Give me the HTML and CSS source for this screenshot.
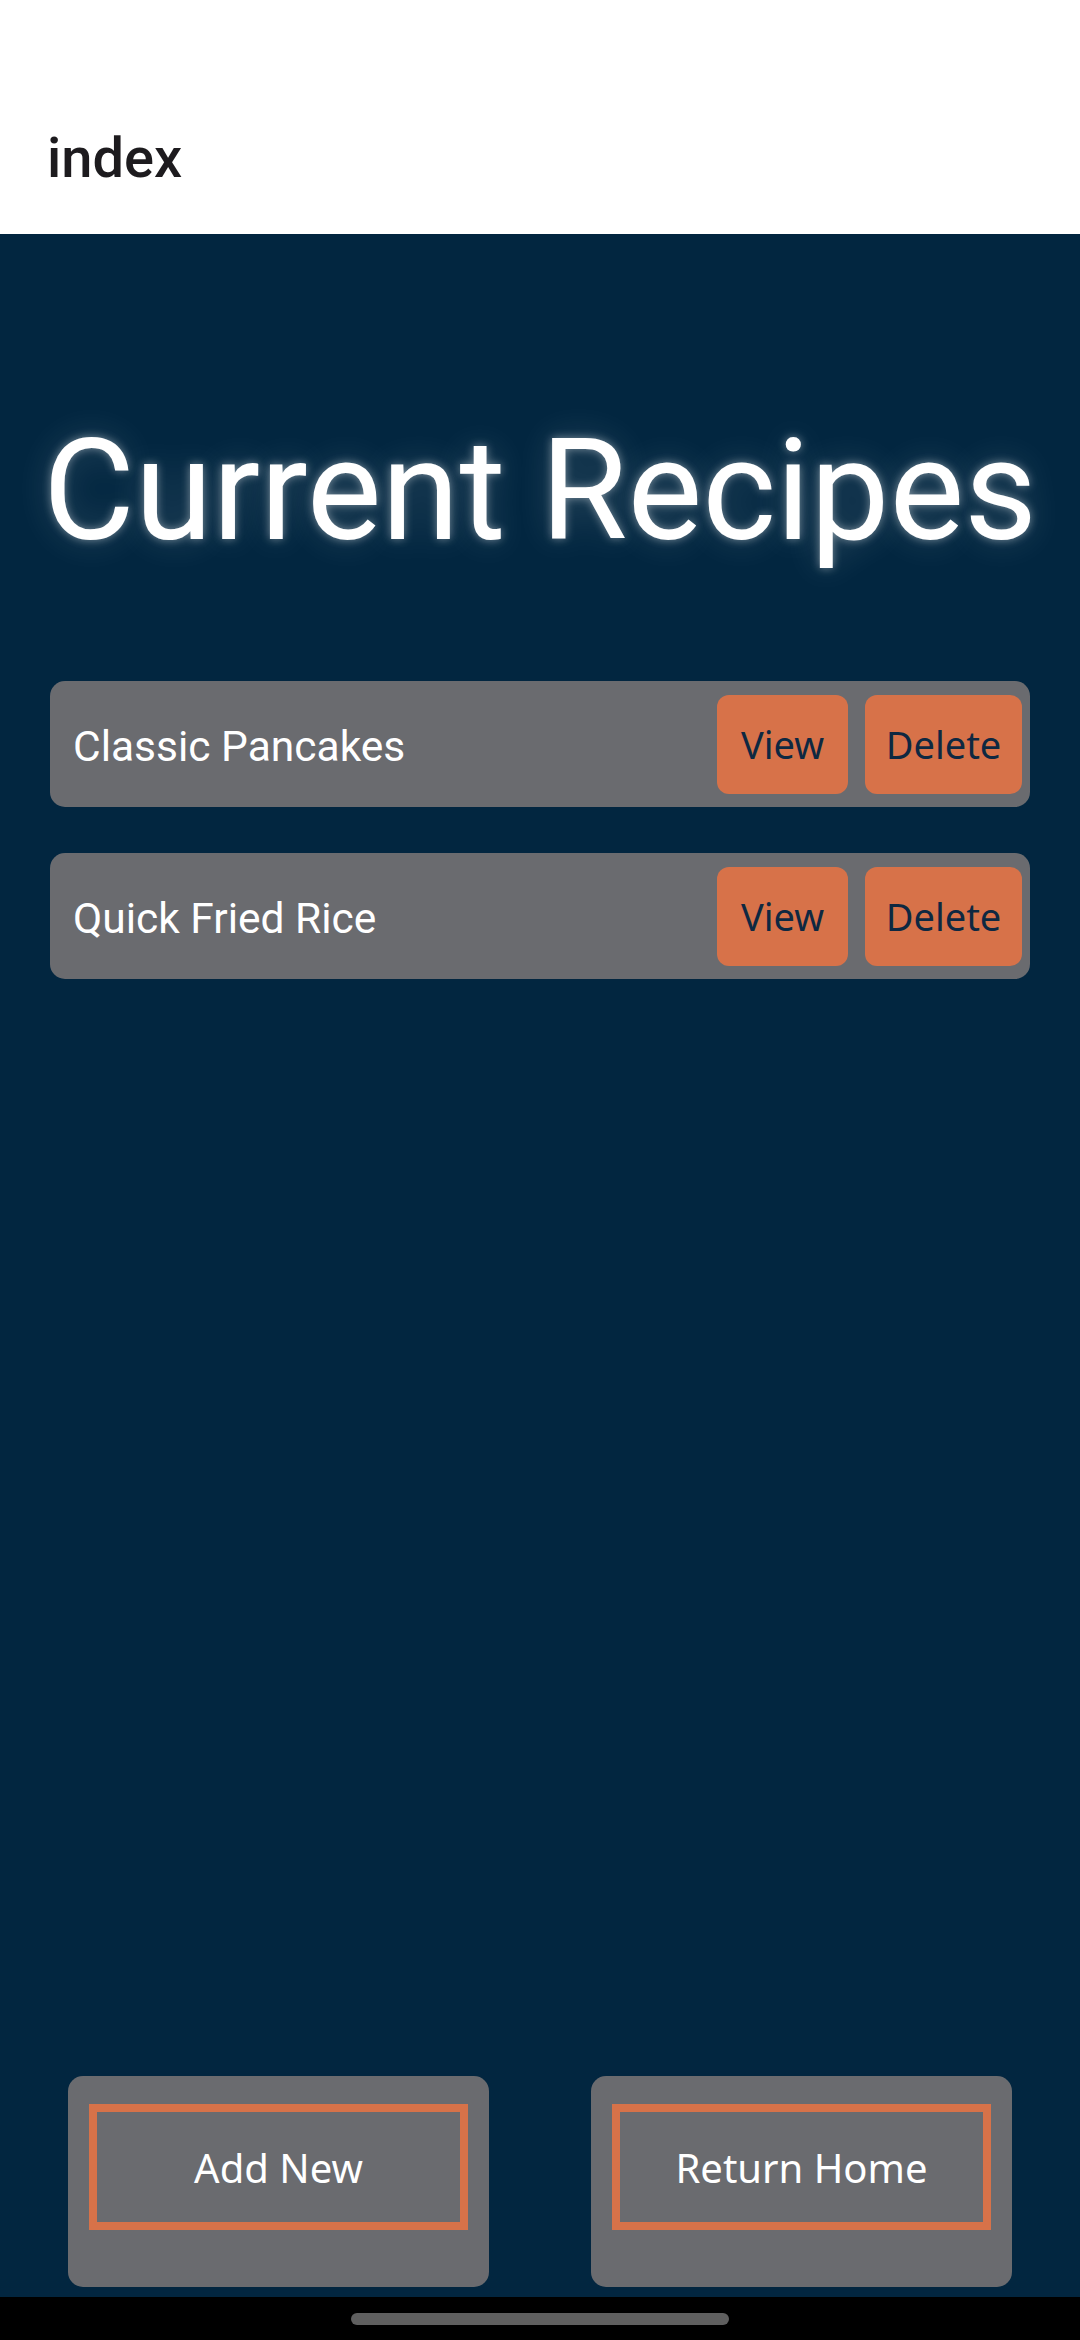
FILE: index.html
```html
<!DOCTYPE html>
<html lang="en">
<head>
<meta charset="utf-8">
<title>index</title>
<link rel="stylesheet" href="styles.css">
</head>
<body>
<div class="screen">
  <header class="appbar">
    <h1 class="appbar-title">index</h1>
  </header>
  <main class="content">
    <h2 class="page-title">Current Recipes</h2>
    <ul class="recipe-list">
      <li class="recipe-card">
        <span class="recipe-name">Classic Pancakes</span>
        <div class="recipe-actions">
          <button class="pill-btn pill-view">View</button>
          <button class="pill-btn pill-delete">Delete</button>
        </div>
      </li>
      <li class="recipe-card">
        <span class="recipe-name">Quick Fried Rice</span>
        <div class="recipe-actions">
          <button class="pill-btn pill-view">View</button>
          <button class="pill-btn pill-delete">Delete</button>
        </div>
      </li>
    </ul>
    <div class="spacer"></div>
    <div class="bottom-row">
      <div class="action-box">
        <button class="outline-btn">Add New</button>
      </div>
      <div class="action-box">
        <button class="outline-btn">Return Home</button>
      </div>
    </div>
  </main>
  <footer class="navbar">
    <div class="home-indicator"></div>
  </footer>
</div>
</body>
</html>
```

FILE: styles.css
```css
* {
  box-sizing: border-box;
}

html, body {
  margin: 0;
  padding: 0;
  width: 1080px;
  height: 2340px;
  overflow: hidden;
}

body {
  font-family: Roboto, "Noto Sans", sans-serif;
  background: #000;
}

.screen {
  width: 1080px;
  height: 2340px;
  display: flex;
  flex-direction: column;
}

.appbar {
  height: 234px;
  flex: 0 0 234px;
  background: #ffffff;
  padding: 130px 0 0 47px;
}

.appbar-title {
  margin: 0;
  font-family: Roboto, sans-serif;
  font-weight: 500;
  font-size: 56px;
  line-height: 56px;
  color: #1d1b1e;
}

.content {
  flex: 1 1 auto;
  background: #022640;
  display: flex;
  flex-direction: column;
  padding-bottom: 10px;
}

.page-title {
  margin: 186px 0 0 0;
  text-align: center;
  font-family: Roboto, sans-serif;
  font-weight: 400;
  font-size: 141px;
  line-height: 141px;
  color: #ffffff;
  text-shadow: 0 0 10px rgba(255, 255, 255, 0.45), 0 0 36px rgba(255, 255, 255, 0.2);
}

.recipe-list {
  list-style: none;
  margin: 120px 0 0 0;
  padding: 0 50px;
  display: flex;
  flex-direction: column;
  gap: 46px;
}

.recipe-card {
  height: 126px;
  background: #6a6b6f;
  border-radius: 15px;
  display: flex;
  align-items: center;
  justify-content: space-between;
  padding: 14px 8px 14px 23px;
}

.recipe-name {
  font-family: Roboto, sans-serif;
  font-size: 42.5px;
  color: #ffffff;
  padding-top: 4px;
}

.recipe-actions {
  display: flex;
  gap: 17px;
  height: 99px;
}

.pill-btn {
  height: 99px;
  border: none;
  border-radius: 12px;
  background: #d77249;
  color: #0e2841;
  font-family: "Noto Sans", sans-serif;
  font-size: 38px;
  padding: 0;
  margin: 0;
  text-align: center;
}

.pill-view {
  width: 131px;
}

.pill-delete {
  width: 157px;
}

.spacer {
  flex: 1 1 auto;
}

.bottom-row {
  display: flex;
  justify-content: space-between;
  padding: 0 68px;
}

.action-box {
  width: 421px;
  height: 211px;
  background: #6a6b6f;
  border-radius: 15px;
  padding: 28px 21px 0 21px;
}

.outline-btn {
  width: 100%;
  height: 126px;
  background: transparent;
  border: 8px solid #d77249;
  border-radius: 0;
  color: #ffffff;
  font-family: "Noto Sans", sans-serif;
  font-size: 40px;
  margin: 0;
  padding: 0;
}

.navbar {
  flex: 0 0 43px;
  height: 43px;
  background: #000000;
  display: flex;
  justify-content: center;
  padding-top: 16px;
}

.home-indicator {
  width: 378px;
  height: 12px;
  border-radius: 6px;
  background: #5f5f5f;
}
```
